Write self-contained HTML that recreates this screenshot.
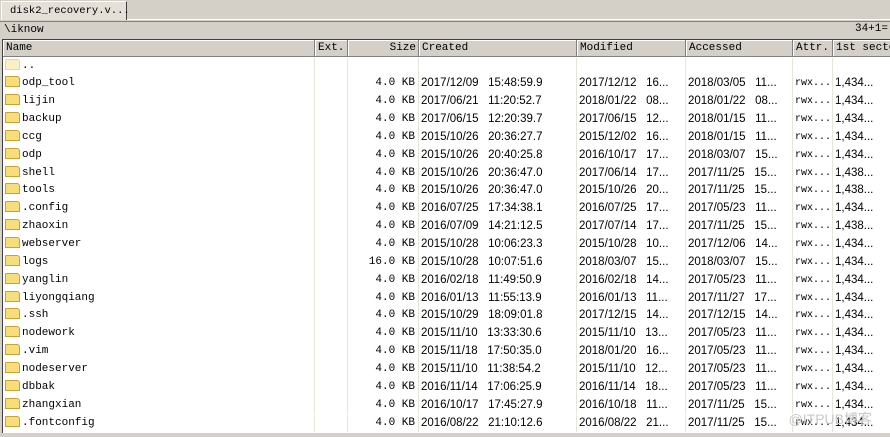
<!DOCTYPE html><html><head><style>
body{margin:0;width:890px;height:437px;overflow:hidden;background:#d4d0c8;font-family:"Liberation Mono",monospace;font-size:11px;color:#000;position:relative}
.tab{position:absolute;left:1px;top:1px;width:126px;height:19px;background:#e4e0d8;border:1px solid #fff;border-right:1px solid #404040;border-bottom:none;line-height:19px;padding-left:8px;box-sizing:border-box;font-size:10.5px}
.tabline{position:absolute;left:127px;top:19px;width:763px;height:1px;background:#fff}
.path{position:absolute;left:0;top:21px;width:890px;height:17px;line-height:17px;padding-left:4px;box-sizing:border-box;border-top:1px solid #808080}
.cnt{position:absolute;right:2px;top:21px;line-height:17px}
.list{position:absolute;left:2px;top:39px;width:888px;height:393px;background:#fff;border-top:1px solid #404040;border-left:1px solid #404040;overflow:hidden}
.hdr{position:absolute;top:0;height:17px;line-height:16px;background:#d4d0c8;border-right:1px solid #808080;border-bottom:1px solid #808080;box-shadow:inset 1px 1px #fff;box-sizing:border-box;padding-left:3px;white-space:nowrap;overflow:hidden}
.row{position:absolute;left:0;width:888px;height:17.85px;line-height:17.85px}
.c{position:absolute;top:0;height:100%;border-right:1px solid #e8e4d8;box-sizing:border-box;white-space:nowrap;overflow:hidden;padding-left:2px}
.s{font-family:"Liberation Sans",sans-serif;font-size:11.5px}
.f{display:inline-block;width:15px;height:11px;background:#f8de7a;border:1px solid #c9a232;box-sizing:border-box;vertical-align:-2px;margin-right:2px;border-radius:1px 3px 0 0}
.wm{position:absolute;right:18px;bottom:8px;color:#c8c8c8;font-family:"Liberation Sans","Noto Sans CJK SC",sans-serif;font-size:14px}
</style></head><body>
<div class="tab">disk2_recovery.v...</div><div class="tabline"></div>
<div class="path">\iknow</div><div class="cnt">34+1=</div>
<div class="list" id="L">
<div class="hdr" style="left:0;width:312px">Name</div>
<div class="hdr" style="left:312px;width:33px">Ext.</div>
<div class="hdr" style="left:345px;width:71px;text-align:right;padding-right:2px">Size</div>
<div class="hdr" style="left:416px;width:158px">Created</div>
<div class="hdr" style="left:574px;width:109px">Modified</div>
<div class="hdr" style="left:683px;width:107px">Accessed</div>
<div class="hdr" style="left:790px;width:40px">Attr.</div>
<div class="hdr" style="left:830px;width:58px">1st sector</div>
</div>
<div class="wm">@ITPUB博客</div>
<script>
var d=[["..","","","","","","",""],
["odp_tool","4.0 KB","2017/12/09","15:48:59.9","2017/12/12","16","2018/03/05","11","1,434..."],
["lijin","4.0 KB","2017/06/21","11:20:52.7","2018/01/22","08","2018/01/22","08","1,434..."],
["backup","4.0 KB","2017/06/15","12:20:39.7","2017/06/15","12","2018/01/15","11","1,434..."],
["ccg","4.0 KB","2015/10/26","20:36:27.7","2015/12/02","16","2018/01/15","11","1,434..."],
["odp","4.0 KB","2015/10/26","20:40:25.8","2016/10/17","17","2018/03/07","15","1,434..."],
["shell","4.0 KB","2015/10/26","20:36:47.0","2017/06/14","17","2017/11/25","15","1,438..."],
["tools","4.0 KB","2015/10/26","20:36:47.0","2015/10/26","20","2017/11/25","15","1,438..."],
[".config","4.0 KB","2016/07/25","17:34:38.1","2016/07/25","17","2017/05/23","11","1,434..."],
["zhaoxin","4.0 KB","2016/07/09","14:21:12.5","2017/07/14","17","2017/11/25","15","1,438..."],
["webserver","4.0 KB","2015/10/28","10:06:23.3","2015/10/28","10","2017/12/06","14","1,434..."],
["logs","16.0 KB","2015/10/28","10:07:51.6","2018/03/07","15","2018/03/07","15","1,434..."],
["yanglin","4.0 KB","2016/02/18","11:49:50.9","2016/02/18","14","2017/05/23","11","1,434..."],
["liyongqiang","4.0 KB","2016/01/13","11:55:13.9","2016/01/13","11","2017/11/27","17","1,434..."],
[".ssh","4.0 KB","2015/10/29","18:09:01.8","2017/12/15","14","2017/12/15","14","1,434..."],
["nodework","4.0 KB","2015/11/10","13:33:30.6","2015/11/10","13","2017/05/23","11","1,434..."],
[".vim","4.0 KB","2015/11/18","17:50:35.0","2018/01/20","16","2017/05/23","11","1,434..."],
["nodeserver","4.0 KB","2015/11/10","11:38:54.2","2015/11/10","12","2017/05/23","11","1,434..."],
["dbbak","4.0 KB","2016/11/14","17:06:25.9","2016/11/14","18","2017/05/23","11","1,434..."],
["zhangxian","4.0 KB","2016/10/17","17:45:27.9","2016/10/18","11","2017/11/25","15","1,434..."],
[".fontconfig","4.0 KB","2016/08/22","21:10:12.6","2016/08/22","21","2017/11/25","15","1,434..."]];
var L=document.getElementById('L'),h='';
d.forEach(function(r,i){
var top=17.5+i*17.85;var up=i==0;
h+='<div class="row" style="top:'+top+'px">'+
'<div class="c" style="left:0;width:312px"><span class="f"'+(up?' style="opacity:.45"':'')+'></span>'+r[0]+'</div>'+
'<div class="c" style="left:312px;width:33px"></div>'+
'<div class="c" style="left:345px;width:71px;text-align:right;padding-right:3px">'+(r[1]||'')+'</div>'+
'<div class="c s" style="left:416px;width:158px">'+(up?'':r[2]+'&nbsp;&nbsp;&nbsp;'+r[3])+'</div>'+
'<div class="c s" style="left:574px;width:109px">'+(up?'':r[4]+'&nbsp;&nbsp;&nbsp;'+r[5]+'...')+'</div>'+
'<div class="c s" style="left:683px;width:107px">'+(up?'':r[6]+'&nbsp;&nbsp;&nbsp;'+r[7]+'...')+'</div>'+
'<div class="c" style="left:790px;width:40px;font-size:10px">'+(up?'':'rwx...')+'</div>'+
'<div class="c s" style="left:830px;width:58px">'+(up?'':r[8])+'</div></div>';});
L.insertAdjacentHTML('beforeend',h);
</script>
</body></html>
